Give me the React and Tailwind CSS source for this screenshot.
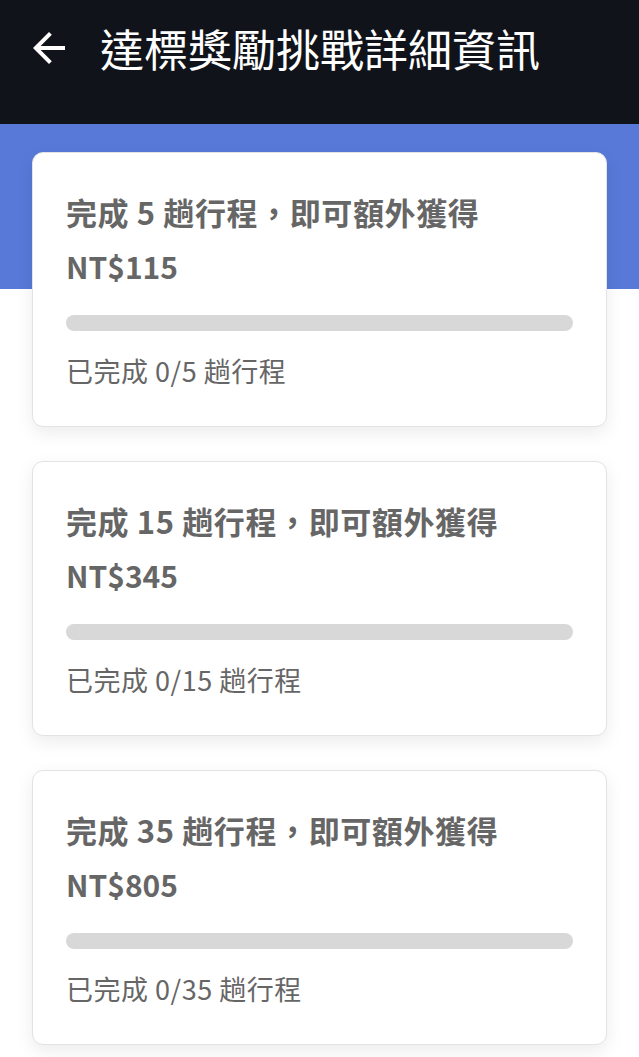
import React from 'react';

const challenges = [
  { trips: 5, reward: 115, done: 0 },
  { trips: 15, reward: 345, done: 0 },
  { trips: 35, reward: 805, done: 0 },
];

const BackArrow = () => (
  <svg width="32" height="32" viewBox="4 4 16 16" fill="white">
    <path d="M20 11H7.83l5.59-5.59L12 4l-8 8 8 8 1.41-1.41L7.83 13H20v-2z" />
  </svg>
);

const ChallengeCard = ({ trips, reward, done }) => (
  <div className="bg-white rounded-[11px] border border-[#e3e3e3] shadow-[0_6px_18px_rgba(0,0,0,0.08)] px-[33px] pt-[36px] pb-[36px]">
    <p className="text-[31px] leading-[45px] tracking-[0.6px] font-semibold text-[#666666]">
      完成 {trips} 趟行程，即可額外獲得
    </p>
    <p className="mt-[10px] text-[30px] leading-[45px] font-bold text-[#666666]">NT${reward}</p>
    <div className="mt-[26px] h-[16px] rounded-full bg-[#d8d8d8] overflow-hidden">
      <div className="h-full bg-[#5879d8]" style={{ width: `${(done / trips) * 100}%` }} />
    </div>
    <p className="mt-[20px] text-[27px] leading-[39px] tracking-[0.5px] text-[#666666]">
      已完成 {done}/{trips} 趟行程
    </p>
  </div>
);

export default function App() {
  return (
    <div
      className="min-h-screen bg-white"
      style={{ fontFamily: '"Noto Sans CJK TC", "Noto Sans", sans-serif' }}
    >
      {/* Header */}
      <header className="h-[124px] bg-[#10141a]">
        <div className="h-[96px] flex items-center pl-[33px]">
          <BackArrow />
          <h1 className="ml-[35px] text-[44px] leading-none text-white font-normal">
            達標獎勵挑戰詳細資訊
          </h1>
        </div>
      </header>

      <div className="h-[165px] bg-[#5879d8]" />

      {/* Cards */}
      <div className="-mt-[137px] px-[32px] flex flex-col gap-[34px] pb-[20px]">
        {challenges.map((c) => (
          <ChallengeCard key={c.trips} {...c} />
        ))}
      </div>
    </div>
  );
}
